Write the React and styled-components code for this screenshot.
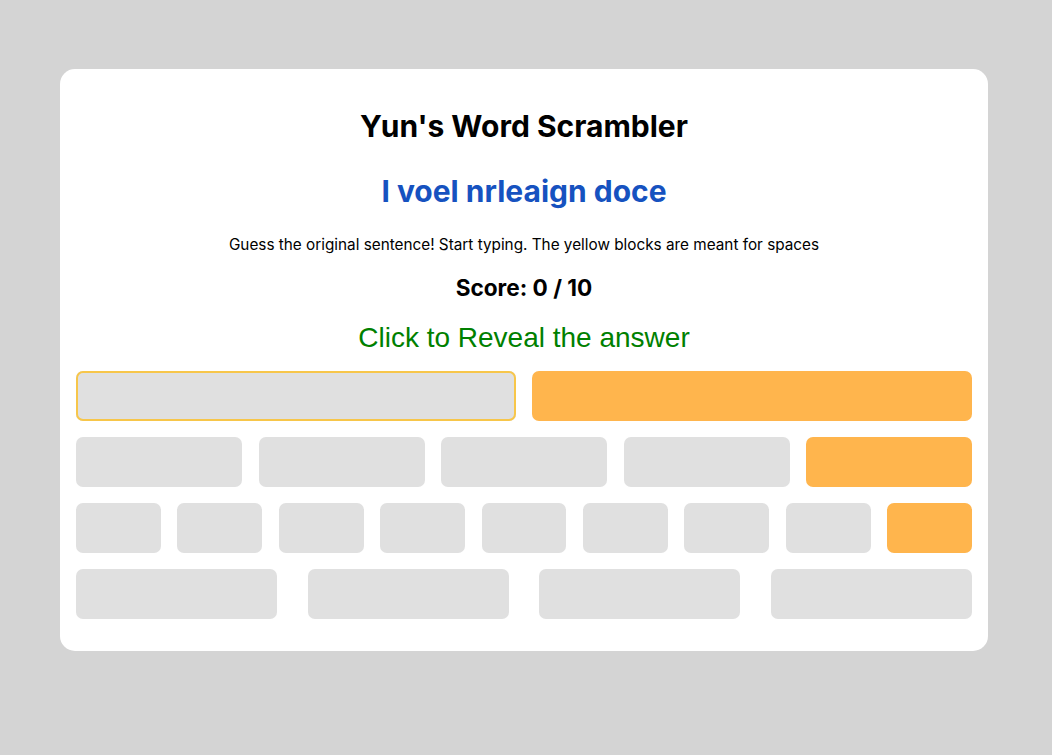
import React from "react";
import styled, { createGlobalStyle } from "styled-components";

const Global = createGlobalStyle`
  html, body { margin: 0; padding: 0; }
  body {
    background: #d4d4d4;
    font-family: Inter, "Noto Sans", sans-serif;
    width: 1052px;
    height: 755px;
  }
`;

const Page = styled.div`
  padding: 69px 64px 0 60px;
  display: flex;
  justify-content: flex-start;
`;

const Card = styled.div`
  width: 928px;
  box-sizing: border-box;
  background: #ffffff;
  border-radius: 15px;
  padding: 39px 16px 32px;
  display: flex;
  flex-direction: column;
  align-items: center;
`;

const Title = styled.h1`
  margin: 0;
  font-family: Inter, sans-serif;
  font-weight: 700;
  font-size: 30px;
  line-height: 36px;
  color: #000;
`;

const Scrambled = styled.h2`
  margin: 29px 0 0;
  font-family: Inter, sans-serif;
  font-weight: 700;
  font-size: 30px;
  line-height: 36px;
  color: #1652c0;
`;

const Hint = styled.p`
  margin: 26px 0 0;
  font-family: Inter, sans-serif;
  font-size: 15.3px;
  line-height: 20px;
  color: #000;
`;

const Score = styled.div`
  margin-top: 19px;
  font-family: Inter, sans-serif;
  font-weight: 700;
  font-size: 22.6px;
  line-height: 28px;
  color: #000;
`;

const Reveal = styled.button`
  margin-top: 19px;
  border: none;
  background: none;
  padding: 0;
  cursor: pointer;
  font-family: "Liberation Sans", Arial, sans-serif;
  font-size: 28px;
  line-height: 34px;
  color: #008000;
`;

const Rows = styled.div`
  margin-top: 16px;
  width: 100%;
  display: flex;
  flex-direction: column;
  gap: 16px;
`;

const Row = styled.div`
  display: flex;
  gap: ${(p) => p.$gap}px;
`;

const Cell = styled.div`
  flex: 1 1 0;
  min-width: 0;
  height: 50px;
  border-radius: 7px;
  background: ${(p) => (p.$space ? "#ffb54d" : "#e0e0e0")};
  box-shadow: ${(p) => (p.$focus ? "inset 0 0 0 2px #f7c64a" : "none")};
`;

const words = [
  { n: 1, space: true, gap: 16 },
  { n: 4, space: true, gap: 16.5 },
  { n: 8, space: true, gap: 16.4 },
  { n: 4, space: false, gap: 30.67 },
];

export default function App() {
  return (
    <>
      <Global />
      <Page>
        <Card>
          <Title>Yun's Word Scrambler</Title>
          <Scrambled>I voel nrleaign doce</Scrambled>
          <Hint>Guess the original sentence! Start typing. The yellow blocks are meant for spaces</Hint>
          <Score>Score: 0 / 10</Score>
          <Reveal>Click to Reveal the answer</Reveal>
          <Rows>
            {words.map((w, wi) => (
              <Row key={wi} $gap={w.gap}>
                {Array.from({ length: w.n }).map((_, i) => (
                  <Cell key={i} $focus={wi === 0 && i === 0} />
                ))}
                {w.space && <Cell $space />}
              </Row>
            ))}
          </Rows>
        </Card>
      </Page>
    </>
  );
}
